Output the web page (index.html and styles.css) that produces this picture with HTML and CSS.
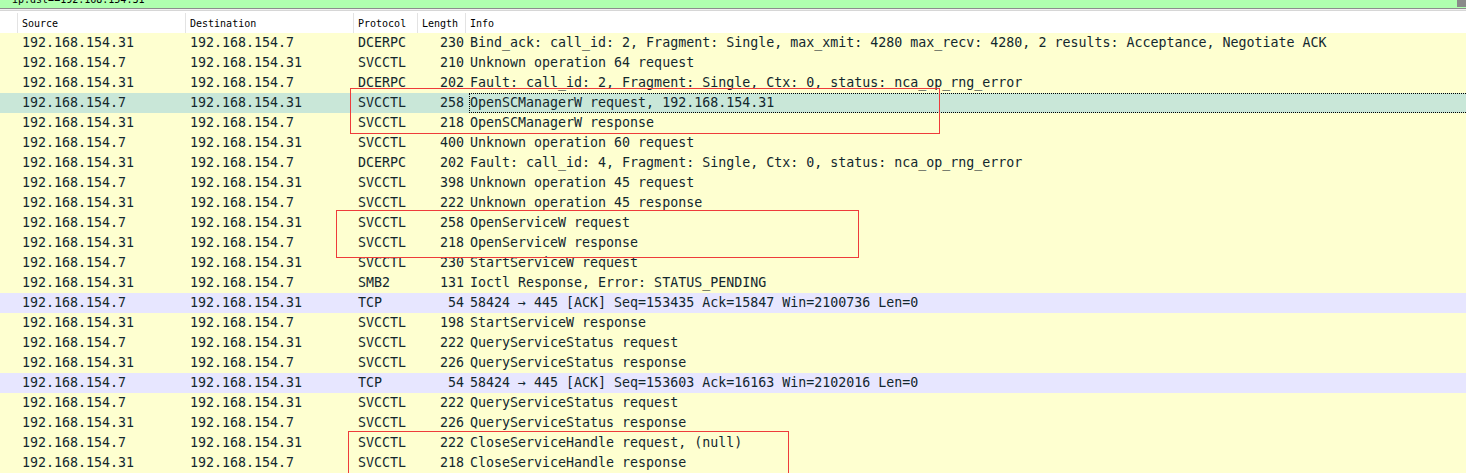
FILE: index.html
```html
<!DOCTYPE html>
<html>
<head>
<meta charset="utf-8">
<link rel="stylesheet" href="styles.css">
</head>
<body>
<div class="filterbar">
  <span class="filter-text"><span class="bm">F</span>ip.dst==192.168.154.31</span>
  <span class="filter-btn"></span>
</div>
<div class="rule"></div>
<div class="list">
  <div class="head">
    <div class="hc"></div>
    <div class="hc">Source</div>
    <div class="hc">Destination</div>
    <div class="hc">Protocol</div>
    <div class="hc">Length</div>
    <div class="hc last">Info</div>
  </div>
  <div class="rows">
    <div class="row"><span></span><span>192.168.154.31</span><span>192.168.154.7</span><span>DCERPC</span><span class="len">230</span><span class="info">Bind_ack: call_id: 2, Fragment: Single, max_xmit: 4280 max_recv: 4280, 2 results: Acceptance, Negotiate ACK</span></div>
    <div class="row"><span></span><span>192.168.154.7</span><span>192.168.154.31</span><span>SVCCTL</span><span class="len">210</span><span class="info">Unknown operation 64 request</span></div>
    <div class="row"><span></span><span>192.168.154.31</span><span>192.168.154.7</span><span>DCERPC</span><span class="len">202</span><span class="info">Fault: call_id: 2, Fragment: Single, Ctx: 0, status: nca_op_rng_error</span></div>
    <div class="row selected"><span></span><span>192.168.154.7</span><span>192.168.154.31</span><span>SVCCTL</span><span class="len">258</span><span class="info focus">OpenSCManagerW request, 192.168.154.31</span></div>
    <div class="row"><span></span><span>192.168.154.31</span><span>192.168.154.7</span><span>SVCCTL</span><span class="len">218</span><span class="info">OpenSCManagerW response</span></div>
    <div class="row"><span></span><span>192.168.154.7</span><span>192.168.154.31</span><span>SVCCTL</span><span class="len">400</span><span class="info">Unknown operation 60 request</span></div>
    <div class="row"><span></span><span>192.168.154.31</span><span>192.168.154.7</span><span>DCERPC</span><span class="len">202</span><span class="info">Fault: call_id: 4, Fragment: Single, Ctx: 0, status: nca_op_rng_error</span></div>
    <div class="row"><span></span><span>192.168.154.7</span><span>192.168.154.31</span><span>SVCCTL</span><span class="len">398</span><span class="info">Unknown operation 45 request</span></div>
    <div class="row"><span></span><span>192.168.154.31</span><span>192.168.154.7</span><span>SVCCTL</span><span class="len">222</span><span class="info">Unknown operation 45 response</span></div>
    <div class="row"><span></span><span>192.168.154.7</span><span>192.168.154.31</span><span>SVCCTL</span><span class="len">258</span><span class="info">OpenServiceW request</span></div>
    <div class="row"><span></span><span>192.168.154.31</span><span>192.168.154.7</span><span>SVCCTL</span><span class="len">218</span><span class="info">OpenServiceW response</span></div>
    <div class="row"><span></span><span>192.168.154.7</span><span>192.168.154.31</span><span>SVCCTL</span><span class="len">230</span><span class="info">StartServiceW request</span></div>
    <div class="row"><span></span><span>192.168.154.31</span><span>192.168.154.7</span><span>SMB2</span><span class="len">131</span><span class="info">Ioctl Response, Error: STATUS_PENDING</span></div>
    <div class="row tcp"><span></span><span>192.168.154.7</span><span>192.168.154.31</span><span>TCP</span><span class="len">54</span><span class="info">58424 → 445 [ACK] Seq=153435 Ack=15847 Win=2100736 Len=0</span></div>
    <div class="row"><span></span><span>192.168.154.31</span><span>192.168.154.7</span><span>SVCCTL</span><span class="len">198</span><span class="info">StartServiceW response</span></div>
    <div class="row"><span></span><span>192.168.154.7</span><span>192.168.154.31</span><span>SVCCTL</span><span class="len">222</span><span class="info">QueryServiceStatus request</span></div>
    <div class="row"><span></span><span>192.168.154.31</span><span>192.168.154.7</span><span>SVCCTL</span><span class="len">226</span><span class="info">QueryServiceStatus response</span></div>
    <div class="row tcp"><span></span><span>192.168.154.7</span><span>192.168.154.31</span><span>TCP</span><span class="len">54</span><span class="info">58424 → 445 [ACK] Seq=153603 Ack=16163 Win=2102016 Len=0</span></div>
    <div class="row"><span></span><span>192.168.154.7</span><span>192.168.154.31</span><span>SVCCTL</span><span class="len">222</span><span class="info">QueryServiceStatus request</span></div>
    <div class="row"><span></span><span>192.168.154.31</span><span>192.168.154.7</span><span>SVCCTL</span><span class="len">226</span><span class="info">QueryServiceStatus response</span></div>
    <div class="row"><span></span><span>192.168.154.7</span><span>192.168.154.31</span><span>SVCCTL</span><span class="len">222</span><span class="info">CloseServiceHandle request, (null)</span></div>
    <div class="row"><span></span><span>192.168.154.31</span><span>192.168.154.7</span><span>SVCCTL</span><span class="len">218</span><span class="info">CloseServiceHandle response</span></div>
    <div class="mark mark1"></div>
    <div class="mark mark2"></div>
    <div class="mark mark3"></div>
  </div>
</div>
</body>
</html>
```

FILE: styles.css
```css
html, body {
  margin: 0;
  padding: 0;
  background: #ffffff;
  overflow: hidden;
  width: 1466px;
  height: 473px;
}

.filterbar {
  height: 8px;
  background: #afffaf;
  overflow: hidden;
  position: relative;
  display: flex;
}

.filter-text {
  font-family: "DejaVu Sans Mono", monospace;
  font-size: 10px;
  line-height: 10px;
  color: #000;
  margin-top: -5px;
  white-space: pre;
}

.bm {
  display: inline-block;
  width: 12px;
  text-indent: -3px;
}

.filter-btn {
  position: absolute;
  right: 0;
  top: 0;
  width: 9px;
  height: 7px;
  background: #8a8a8a;
}

.rule {
  height: 1px;
  border-top: 1px solid #8c8c8c;
  border-bottom: 1px solid #d6d6d6;
  background: #f0f0f0;
}

.list {
  padding-top: 1px;
}

.head {
  display: grid;
  grid-template-columns: 18px 168px 168px 64px 48px 1fr;
  height: 21px;
  background: #ffffff;
  font-family: "DejaVu Sans Mono", monospace;
  font-size: 10px;
  color: #000;
}

.hc {
  border-right: 1px solid #e3e3e3;
  padding-left: 4px;
  line-height: 21px;
  margin-top: 1px;
}

.hc.last {
  border-right: none;
}

.rows {
  position: relative;
  font-family: "DejaVu Sans Mono", monospace;
  font-size: 13.3px;
  color: #12272e;
}

.row {
  display: grid;
  grid-template-columns: 18px 168px 168px 64px 48px 1fr;
  height: 20px;
  line-height: 20px;
  background: #feffd0;
  white-space: pre;
}

.row > span {
  padding-left: 4px;
  overflow: hidden;
}

.row > span.len {
  text-align: right;
  padding-left: 0;
  padding-right: 2px;
}

.row > span.info {
  padding-left: 4px;
  overflow: visible;
}

.row.tcp {
  background: #e7e6ff;
}

.row.selected {
  background: #c9e7d8;
}

.info.focus {
  position: relative;
}

.info.focus::after {
  content: "";
  position: absolute;
  left: 3px;
  top: 0;
  right: 0;
  bottom: 0;
  border: 1px dotted #000;
  border-right: none;
}

.mark {
  position: absolute;
  border: 1px solid #ee3b3b;
  box-sizing: border-box;
}

.mark1 {
  left: 350px;
  top: 55px;
  width: 590px;
  height: 46px;
}

.mark2 {
  left: 336px;
  top: 177px;
  width: 523px;
  height: 48px;
}

.mark3 {
  left: 348px;
  top: 398px;
  width: 441px;
  height: 60px;
}
```
